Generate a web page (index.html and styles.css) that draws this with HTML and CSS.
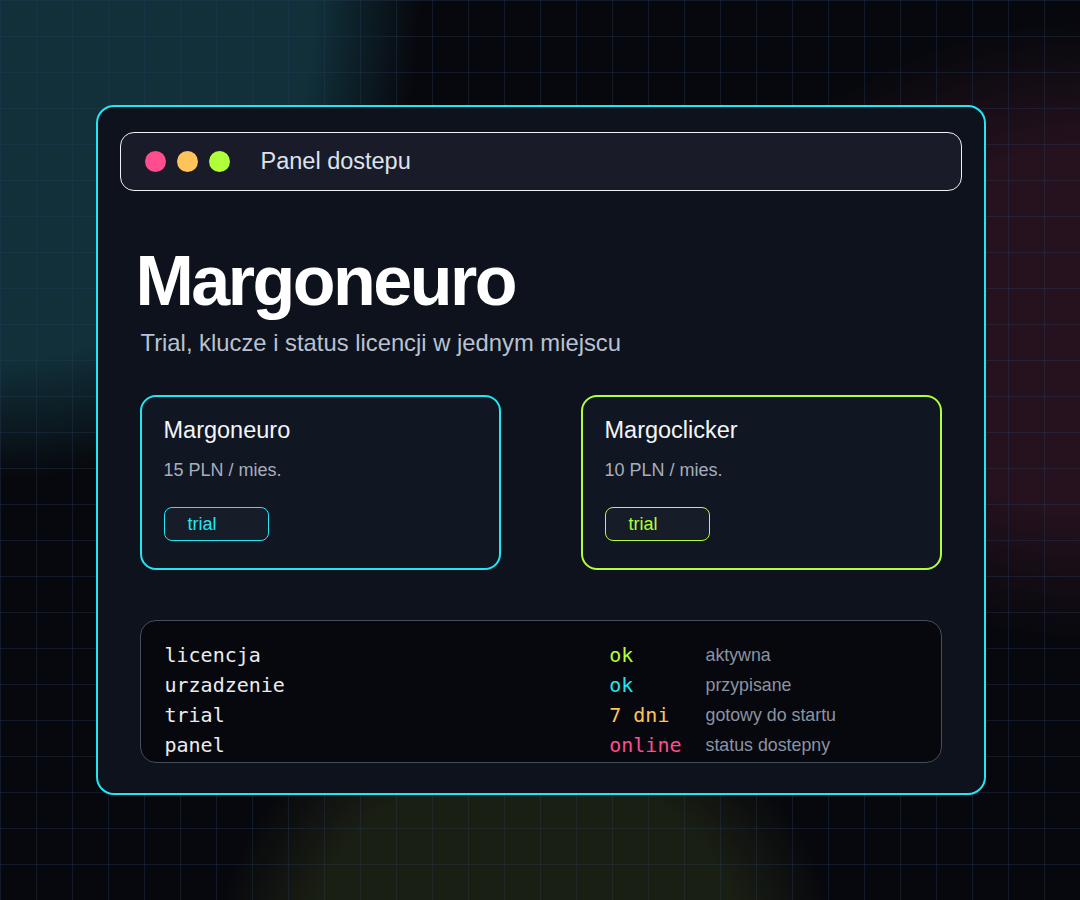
FILE: index.html
```html
<!DOCTYPE html>
<html lang="pl">
<head>
<meta charset="utf-8">
<title>Panel dostepu – Margoneuro</title>
<link rel="stylesheet" href="styles.css">
</head>
<body>
  <main class="panel">
    <header class="titlebar">
      <span class="dot dot-pink"></span>
      <span class="dot dot-amber"></span>
      <span class="dot dot-lime"></span>
      <span class="titlebar-label">Panel dostepu</span>
    </header>

    <section class="content">
      <h1 class="brand">Margoneuro</h1>
      <p class="tagline">Trial, klucze i status licencji w jednym miejscu</p>

      <div class="plans">
        <article class="plan plan-cyan">
          <h2 class="plan-name">Margoneuro</h2>
          <p class="plan-price">15 PLN / mies.</p>
          <span class="badge">trial</span>
        </article>
        <article class="plan plan-lime">
          <h2 class="plan-name">Margoclicker</h2>
          <p class="plan-price">10 PLN / mies.</p>
          <span class="badge">trial</span>
        </article>
      </div>

      <div class="status">
        <span class="key">licencja</span>
        <span class="val val-lime">ok</span>
        <span class="note">aktywna</span>

        <span class="key">urzadzenie</span>
        <span class="val val-cyan">ok</span>
        <span class="note">przypisane</span>

        <span class="key">trial</span>
        <span class="val val-amber">7 dni</span>
        <span class="note">gotowy do startu</span>

        <span class="key">panel</span>
        <span class="val val-pink">online</span>
        <span class="note">status dostepny</span>
      </div>
    </section>
  </main>
</body>
</html>
```

FILE: styles.css
```css
* {
  box-sizing: border-box;
}

html,
body {
  margin: 0;
  height: 100%;
}

body {
  min-height: 900px;
  display: flex;
  align-items: center;
  justify-content: center;
  padding-left: 1px;
  font-family: "Liberation Sans", Arial, sans-serif;
  color: #f1f4f8;
  background-color: #07080d;
  background-image:
    linear-gradient(to right, rgba(40, 60, 90, 0.35) 1px, transparent 1px),
    linear-gradient(to bottom, rgba(40, 60, 90, 0.35) 1px, transparent 1px),
    radial-gradient(ellipse 420px 480px at 0 0, #11303a 0, #11303a 75%, rgba(17, 48, 58, 0) 100%),
    radial-gradient(ellipse 400px 310px at 1100px 330px, #25121e 0, #25121e 58%, rgba(37, 18, 30, 0) 100%),
    radial-gradient(ellipse 310px 280px at 525px 960px, #1a1f13 0, #1a1f13 70%, rgba(26, 31, 19, 0) 100%);
  background-size: 36px 36px, 36px 36px, auto, auto, auto;
}

/* main window */
.panel {
  width: 890px;
  padding: 25px 22px 30px;
  border: 2px solid #22e6f2;
  border-radius: 18px;
  background: #0e121c;
}

.titlebar {
  display: flex;
  align-items: center;
  height: 59px;
  padding-left: 24px;
  border: 1px solid #eef1f5;
  border-radius: 14px;
  background: #191c28;
}

.dot {
  width: 21px;
  height: 21px;
  border-radius: 50%;
  margin-right: 11px;
}

.dot-pink { background: #ff4d8d; }
.dot-amber { background: #ffc35a; }
.dot-lime { background: #b0ff3a; }

.titlebar-label {
  margin-left: 20px;
  font-size: 23.5px;
  color: #dde3ee;
}

.content {
  padding: 0 20px;
}

.brand {
  margin: 55px 0 0 -4px;
  font-size: 70px;
  line-height: 70px;
  font-weight: 700;
  letter-spacing: -2.5px;
  color: #ffffff;
}

.tagline {
  margin: 13px 0 0 1px;
  font-size: 23.8px;
  line-height: 28px;
  color: #b9c2d2;
}

/* plan cards */
.plans {
  display: grid;
  grid-template-columns: 1fr 1fr;
  column-gap: 80px;
  margin-top: 38px;
}

.plan {
  height: 175px;
  padding: 20px 22px 0;
  border: 2px solid;
  border-radius: 16px;
  background: #111623;
}

.plan-cyan { border-color: #22e6f2; --accent: #22e6f2; }
.plan-lime { border-color: #b0ff3a; --accent: #b0ff3a; }

.plan-name {
  margin: 0;
  font-size: 23.5px;
  line-height: 27px;
  font-weight: 400;
  color: #f3f5f9;
}

.plan-price {
  margin: 15px 0 0;
  font-size: 18px;
  line-height: 22px;
  color: #a7aebb;
}

.badge {
  display: block;
  width: 105px;
  height: 34px;
  margin-top: 26px;
  padding-left: 23px;
  border: 1px solid var(--accent);
  border-radius: 8px;
  font-size: 18px;
  line-height: 32px;
  color: var(--accent);
  background: rgba(120, 160, 140, 0.05);
}

/* status readout */
.status {
  display: grid;
  grid-template-columns: 1fr auto 211px;
  column-gap: 24px;
  margin-top: 50px;
  padding: 19px 24px 2px;
  border: 1px solid #464c5b;
  border-radius: 16px;
  background: #07080d;
}

.key,
.val {
  font-family: "DejaVu Sans Mono", "Liberation Mono", monospace;
  font-size: 20px;
  line-height: 30px;
}

.key { color: #e9edf3; }

.val-lime { color: #b0ff3a; }
.val-cyan { color: #22e6f2; }
.val-amber { color: #ffc35a; }
.val-pink { color: #ff4d8d; }

.note {
  font-size: 17.8px;
  line-height: 30px;
  color: #8b93a3;
}
```
